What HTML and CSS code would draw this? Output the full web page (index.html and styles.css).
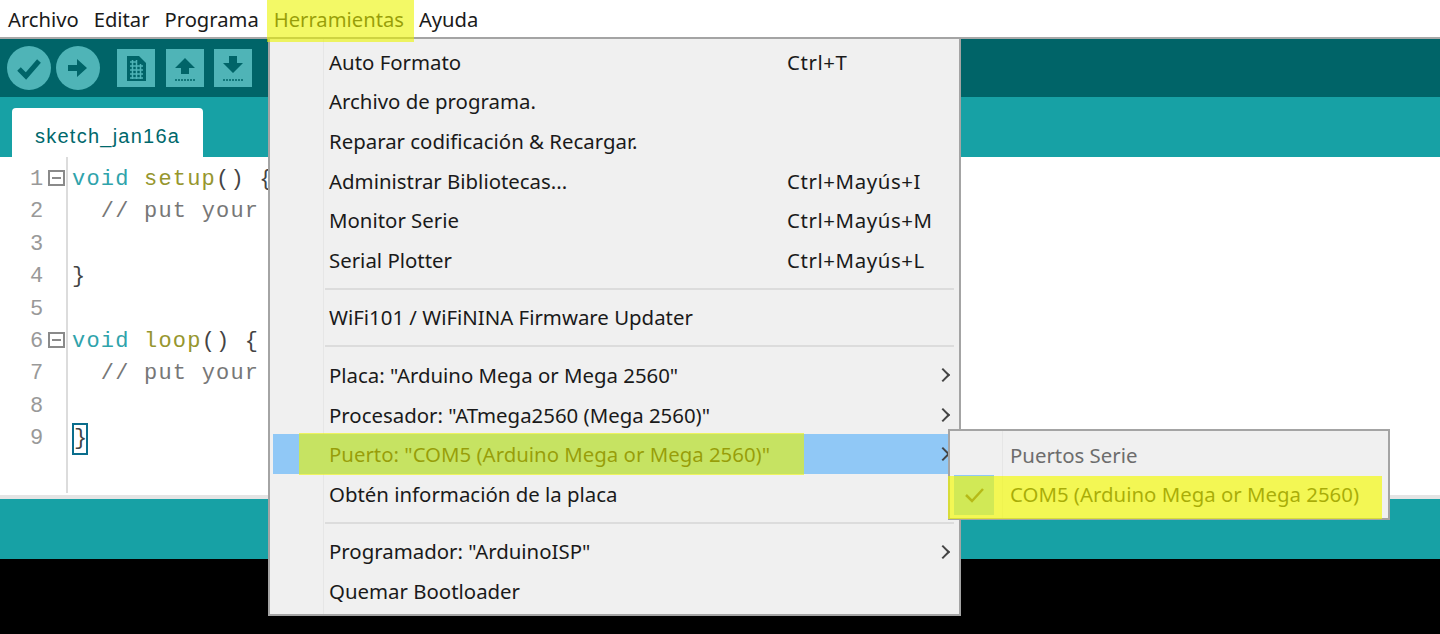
FILE: index.html
```html
<!DOCTYPE html>
<html lang="es">
<head>
    <meta charset="UTF-8">
    <meta name="viewport" content="width=device-width, initial-scale=1.0">
    <title>Arduino IDE - Herramientas</title>
    <link rel="stylesheet" href="styles.css">
</head>
<body>

    <nav class="menubar">
        <a>Archivo</a>
        <a>Editar</a>
        <a>Programa</a>
        <a>Herramientas</a>
        <a>Ayuda</a>
    </nav>

    <div class="toolbar">
        <button class="round-btn">
            <svg viewBox="0 0 44 44" width="44" height="44"><path d="M12 23l7 7 13-15" fill="none" stroke="#006468" stroke-width="5"/></svg>
        </button>
        <button class="round-btn">
            <svg viewBox="0 0 44 44" width="44" height="44"><path d="M12 19h9v-6l10 9-10 9v-6h-9z" fill="#006468"/></svg>
        </button>
        <button class="square-btn first">
            <svg viewBox="0 0 38 38" width="38" height="38"><path d="M10 7h12l7 7v18h-19z" fill="#006468"/><path d="M13 13h6M13 17h13M13 21h13M13 25h13M13 29h13M15.500 11v19M19.500 11v19M23.500 15v15" stroke="#4fb4b7" stroke-width="1.500" fill="none"/></svg>
        </button>
        <button class="square-btn">
            <svg viewBox="0 0 38 38" width="38" height="38"><path d="M19 9l10 10h-6v6h-8v-6h-6z" fill="#006468"/><path d="M9 31h20" stroke="#006468" stroke-width="1.500" stroke-dasharray="2 1"/></svg>
        </button>
        <button class="square-btn">
            <svg viewBox="0 0 38 38" width="38" height="38"><path d="M15 7h8v7h6l-10 10-10-10h6z" fill="#006468"/><path d="M9 31h20" stroke="#006468" stroke-width="1.500" stroke-dasharray="2 1"/></svg>
        </button>
    </div>

    <div class="tabbar">
        <div class="tab">sketch_jan16a</div>
    </div>

    <div class="editor">
        <div class="gutter">
            <div class="line-no">1<span class="fold"></span></div>
            <div class="line-no">2</div>
            <div class="line-no">3</div>
            <div class="line-no">4</div>
            <div class="line-no">5</div>
            <div class="line-no">6<span class="fold"></span></div>
            <div class="line-no">7</div>
            <div class="line-no">8</div>
            <div class="line-no">9</div>
        </div>
        <div class="code">
            <div class="code-line"><span class="kw">void</span> <span class="fn">setup</span>() {</div>
            <div class="code-line">  <span class="comment">// put your</span></div>
            <div class="code-line"></div>
            <div class="code-line">}</div>
            <div class="code-line"></div>
            <div class="code-line"><span class="kw">void</span> <span class="fn">loop</span>() {</div>
            <div class="code-line">  <span class="comment">// put your</span></div>
            <div class="code-line"></div>
            <div class="code-line"><span class="match">}</span></div>
        </div>
    </div>

    <div class="status"></div>
    <div class="console"></div>

    <!-- Menú Herramientas -->
    <div class="dropdown tools-menu">
        <div class="item"><span>Auto Formato</span><span class="shortcut">Ctrl+T</span></div>
        <div class="item"><span>Archivo de programa.</span></div>
        <div class="item"><span>Reparar codificación &amp; Recargar.</span></div>
        <div class="item"><span>Administrar Bibliotecas...</span><span class="shortcut">Ctrl+Mayús+I</span></div>
        <div class="item"><span>Monitor Serie</span><span class="shortcut">Ctrl+Mayús+M</span></div>
        <div class="item"><span>Serial Plotter</span><span class="shortcut">Ctrl+Mayús+L</span></div>
        <div class="sep"></div>
        <div class="item"><span>WiFi101 / WiFiNINA Firmware Updater</span></div>
        <div class="sep"></div>
        <div class="item arrow"><span>Placa: "Arduino Mega or Mega 2560"</span></div>
        <div class="item arrow"><span>Procesador: "ATmega2560 (Mega 2560)"</span></div>
        <div class="item arrow selected"><span>Puerto: "COM5 (Arduino Mega or Mega 2560)"</span></div>
        <div class="item"><span>Obtén información de la placa</span></div>
        <div class="sep"></div>
        <div class="item arrow"><span>Programador: "ArduinoISP"</span></div>
        <div class="item"><span>Quemar Bootloader</span></div>
    </div>

    <!-- Submenú Puerto -->
    <div class="dropdown port-menu">
        <div class="item label"><span>Puertos Serie</span></div>
        <div class="item checked">
            <span class="check">
                <svg viewBox="0 0 40 40" width="40" height="40"><path d="M12 20l6 6 11-12" fill="none" stroke="#444" stroke-width="2.500"/></svg>
            </span>
            <span>COM5 (Arduino Mega or Mega 2560)</span>
        </div>
    </div>

    <!-- Marcas amarillas -->
    <div class="mark mark-tools"></div>
    <div class="mark mark-port"></div>
    <div class="mark mark-com"></div>

</body>
</html>
```

FILE: styles.css
```css
/* Reset CSS */
* {
    margin: 0;
    padding: 0;
    box-sizing: border-box;
}

html, body {
    height: 634px;
    overflow: hidden;
}

body {
    font-family: 'Noto Sans', sans-serif;
    background-color: #000;
    color: #1a1a1a;
    position: relative;
    display: flex;
    flex-direction: column;
}

.menubar {
    height: 39px;
    flex: none;
    background-color: #fff;
    border-bottom: 2px solid #a8a8a8;
    display: flex;
    align-items: center;
    padding: 0 0 0 8px;
    gap: 15px;
    font-size: 20.200px;
}

.toolbar {
    height: 58px;
    flex: none;
    background-color: #006468;
    display: flex;
    align-items: center;
    gap: 5px;
    padding: 0 0 0 7px;
}

.round-btn {
    width: 44px;
    height: 44px;
    border: none;
    border-radius: 50%;
    background-color: #4fb4b7;
}

.square-btn {
    width: 38px;
    height: 38px;
    border: none;
    margin-left: 5.500px;
    background-color: #4fb4b7;
}

.square-btn.first {
    margin-left: 12px;
}

.round-btn svg, .square-btn svg {
    display: block;
}

.tabbar {
    height: 60px;
    flex: none;
    background-color: #17a1a5;
    display: flex;
    align-items: flex-end;
    padding-left: 12px;
}

.tab {
    width: 191px;
    height: 49px;
    background-color: #fff;
    border-radius: 4px 4px 0 0;
    color: #00686c;
    font-family: 'Liberation Sans', sans-serif;
    font-size: 20px;
    letter-spacing: 1.250px;
    padding: 17px 0 0 23px;
}

.editor {
    height: 338px;
    flex: none;
    background-color: #fff;
    display: flex;
    font-family: 'Liberation Mono', monospace;
    font-size: 22px;
    padding-top: 7px;
}

.gutter {
    width: 68px;
    flex: none;
    border-right: 2px solid #dcdcdc;
    margin-bottom: 2px;
    margin-top: -7px;
    padding-top: 7px;
}

.line-no, .code-line {
    height: 32.400px;
    line-height: 32.400px;
    white-space: pre;
}

.line-no {
    color: #999;
    position: relative;
    padding-left: 30px;
}

/* Botón de plegado */
.fold {
    position: absolute;
    left: 48px;
    top: 6px;
    width: 17px;
    height: 16px;
    border: 2px solid #8a8a8a;
}

.fold::after {
    content: "";
    position: absolute;
    left: 2px;
    right: 2px;
    top: 5px;
    height: 2px;
    background-color: #8a8a8a;
}

.code {
    padding-left: 4px;
    color: #444;
    letter-spacing: 1.200px;
}

.kw {
    color: #2fa3ab;
}

.fn {
    color: #96962e;
}

.comment {
    color: #777;
}

.match {
    display: inline-block;
    width: 16px;
    height: 32px;
    line-height: 28px;
    border: 2px solid #0a6d8c;
    letter-spacing: 0;
}

.status {
    height: 64px;
    flex: none;
    background-color: #17a1a5;
    border-top: 4px solid #e4e4e4;
}

.console {
    flex: 1;
    background-color: #000;
}

.dropdown {
    position: absolute;
    background-color: #f0f0f0;
    border: 2px solid #a4a4a4;
    font-size: 20.400px;
}

.dropdown::before {
    content: "";
    position: absolute;
    top: 0;
    bottom: 0;
    width: 1px;
    background-color: #e6e6e6;
}

.tools-menu {
    left: 268px;
    top: 37px;
    width: 693px;
    height: 579px;
    padding: 3px 2px 3px 3px;
}

.tools-menu::before {
    left: 53px;
}

.port-menu {
    left: 948px;
    top: 429px;
    width: 442px;
    height: 91px;
    padding-top: 4px;
}

.port-menu::before {
    left: 52px;
}

.item {
    height: 39.600px;
    display: flex;
    align-items: center;
    padding-left: 56px;
    position: relative;
}

.shortcut {
    position: absolute;
    left: 514px;
    letter-spacing: 0.600px;
}

.arrow::after {
    content: "";
    position: absolute;
    right: 9px;
    top: 15px;
    width: 8px;
    height: 8px;
    border-top: 2px solid #444;
    border-right: 2px solid #444;
    transform: rotate(45deg);
}

.selected {
    background-color: #90c8f6;
}

.sep {
    height: 18px;
    margin-left: 52px;
    margin-right: 3px;
    padding-top: 8px;
}

.sep::after {
    content: "";
    display: block;
    height: 2px;
    background-color: #dcdcdc;
}

.port-menu .item {
    padding-left: 60px;
}

.label {
    color: #6d6d6d;
}

.check {
    position: absolute;
    left: 4px;
    top: 0;
    width: 40px;
    height: 40px;
    background-color: #90c8f6;
}

.check svg {
    display: block;
}

/* Resaltado amarillo encima de la captura */
.mark {
    position: absolute;
    background-color: rgba(235, 245, 0, 0.6);
}

.mark-tools {
    left: 267px;
    top: 0;
    width: 147px;
    height: 42px;
}

.mark-port {
    left: 299px;
    top: 433px;
    width: 505px;
    height: 42px;
}

.mark-com {
    left: 948px;
    top: 476px;
    width: 434px;
    height: 43px;
    background-color: rgba(245, 250, 0, 0.65);
}
```
